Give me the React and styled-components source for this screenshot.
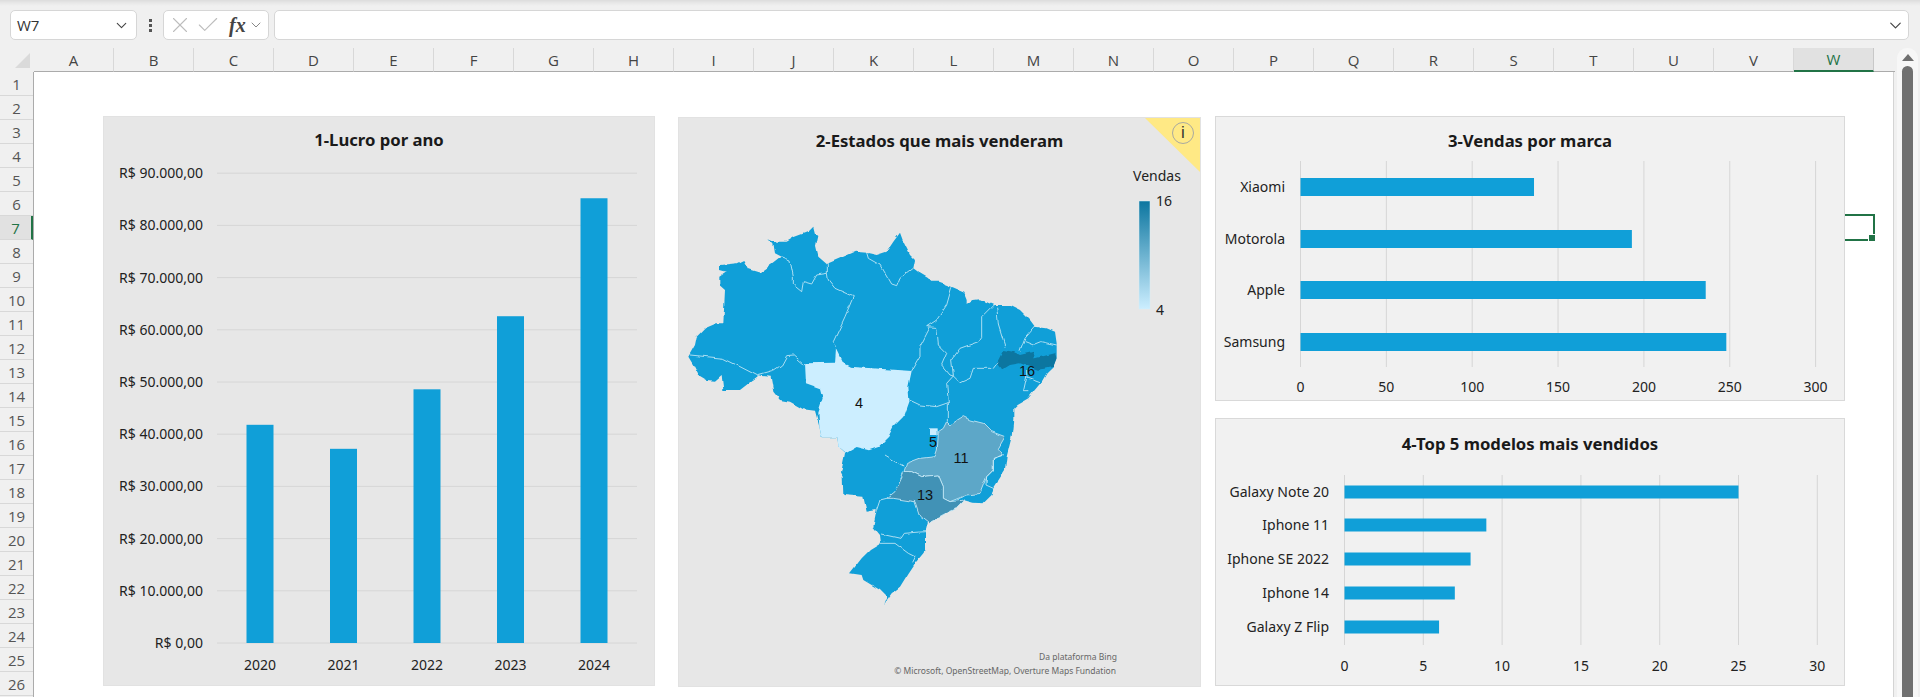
import React from "react";
import styled, { createGlobalStyle } from "styled-components";
import { ChevronDown, X, Check } from "lucide-react";

const GlobalStyle = createGlobalStyle`
  html, body { margin: 0; padding: 0; height: 100%; overflow: hidden; }
  body { background: #f0f0f0; font-family: "Open Sans", "Liberation Sans", sans-serif; }
  * { box-sizing: border-box; }
`;

const COLUMNS = "ABCDEFGHIJKLMNOPQRSTUVW".split("");
const ROWS = Array.from({ length: 26 }, (_, i) => i + 1);

const BLUE = "#109FD8";
const SELECT_GREEN = "#217346";

const Window = styled.div`
  width: 1920px;
  height: 697px;
  overflow: hidden;
  display: flex;
  flex-direction: column;
  background: #f0f0f0;
`;
const TopEdge = styled.div`
  height: 10px;
  flex: none;
  background: linear-gradient(#dcdcdc, #e8e8e8 30%, #f0f0f0 60%);
`;
const FormulaBar = styled.div`
  height: 30px;
  flex: none;
  display: flex;
  align-items: stretch;
  padding-left: 10px;
  padding-right: 11px;
`;
const FieldBox = styled.div`
  background: #fff;
  border: 1px solid #d6d6d6;
  border-radius: 5px;
  display: flex;
  align-items: center;
`;
const NameBox = styled(FieldBox)`
  width: 127px;
  padding: 0 6px 0 6px;
  justify-content: space-between;
  font-size: 15px;
  color: #333;
`;
const Grip = styled.div`
  width: 26px;
  display: flex;
  flex-direction: column;
  align-items: center;
  justify-content: center;
  gap: 2px;
  span {
    width: 3px;
    height: 3px;
    background: #555;
  }
`;
const FxBox = styled(FieldBox)`
  width: 106px;
  padding: 0 2px 0 3px;
  color: #bdbdbd;
  gap: 2px;
`;
const FxGlyph = styled.span`
  font-family: "Liberation Serif", serif;
  font-style: italic;
  font-weight: 700;
  font-size: 20px;
  color: #444;
  margin-left: 6px;
  line-height: 1;
`;
const FormulaInput = styled(FieldBox)`
  flex: 1;
  margin-left: 5px;
  justify-content: flex-end;
  padding-right: 3px;
`;

const HeaderRow = styled.div`
  height: 24px;
  flex: none;
  margin-top: 8px;
  display: flex;
`;
const Corner = styled.div`
  width: 34px;
  position: relative;
  &::after {
    content: "";
    position: absolute;
    right: 4px;
    bottom: 4px;
    border-style: solid;
    border-width: 0 0 15px 15px;
    border-color: transparent transparent #dadada transparent;
  }
`;
const ColumnCell = styled.div`
  width: 80px;
  display: flex;
  align-items: center;
  justify-content: center;
  font-size: 15px;
  color: ${(p) => (p.$active ? SELECT_GREEN : "#444")};
  background: ${(p) => (p.$active ? "#e1e1e1" : "transparent")};
  border-right: 1px solid ${(p) => (p.$active ? "#c8c8c8" : "#d8d8d8")};
  border-bottom: ${(p) => (p.$active ? `2px solid ${SELECT_GREEN}` : "1px solid #ababab")};
`;
const HeaderEnd = styled.div`
  width: 21px;
  border-bottom: 1px solid #ababab;
`;

const Body = styled.div`
  flex: 1;
  display: flex;
  min-height: 0;
`;
const RowHeader = styled.div`
  width: 34px;
  flex: none;
  display: flex;
  flex-direction: column;
  border-right: 1px solid #ababab;
`;
const RowCell = styled.div`
  height: 24px;
  flex: none;
  display: flex;
  align-items: center;
  justify-content: center;
  font-size: 15px;
  color: ${(p) => (p.$active ? SELECT_GREEN : "#555")};
  background: ${(p) => (p.$active ? "#e1e1e1" : "transparent")};
  border-bottom: 1px solid #d8d8d8;
  border-right: ${(p) => (p.$active ? `2px solid ${SELECT_GREEN}` : "0")};
`;
const Sheet = styled.div`
  width: 1860px;
  flex: none;
  position: relative;
  background: #fff;
  padding: 44px 0 0 69px;
  display: grid;
  grid-template-columns: 552px 546px 644px;
  grid-template-rows: 285px 268px;
  row-gap: 17px;
  align-content: start;
  justify-content: start;
  border-right: 1px solid #d4d4d4;
`;
const SelectedCell = styled.div`
  position: absolute;
  left: 1759px;
  top: 142px;
  width: 82px;
  height: 27px;
  border: 2px solid ${SELECT_GREEN};
  &::after {
    content: "";
    position: absolute;
    right: -3px;
    bottom: -3px;
    width: 6px;
    height: 6px;
    background: ${SELECT_GREEN};
    border: 1px solid #fff;
  }
`;
const ScrollTrack = styled.div`
  flex: 1;
  margin: -24px 2px 0 3px;
  background: #f7f7f7;
  border-radius: 10px 10px 0 0;
  display: flex;
  flex-direction: column;
  align-items: center;
  padding-top: 6px;
  gap: 5px;
`;
const ScrollArrow = styled.div`
  border-style: solid;
  border-width: 0 6px 7px 6px;
  border-color: transparent transparent #707070 transparent;
`;
const ScrollThumb = styled.div`
  flex: 1;
  width: 11px;
  background: #707070;
  border-radius: 6px 6px 0 0;
`;

const Card = styled.section`
  position: relative;
  z-index: 1;
  display: flex;
  flex-direction: column;
  overflow: hidden;
  background: ${(p) => p.$bg};
  border: 1px solid ${(p) => (p.$bg === "#e7e7e7" ? "#e2e2e2" : "#d9d9d9")};
`;
const TallCard = styled(Card)`
  grid-row: 1 / span 2;
`;
const MapCard = styled(TallCard)`
  margin: 1px 0 -1px 23px;
`;
const RightCard = styled(Card)`
  margin-left: 14px;
`;
const CardTitle = styled.h2`
  margin: 0;
  height: ${(p) => p.$h || 34}px;
  flex: none;
  padding-top: ${(p) => (p.$h ? p.$h - 21 : 13)}px;
  line-height: 20px;
  text-align: center;
  font-family: "Noto Sans", sans-serif;
  font-weight: 700;
  font-size: 16.7px;
  color: #1a1a1a;
`;
const Plot = styled.svg`
  display: block;
  flex: none;
`;
const AxisText = styled.text`
  font-family: "Noto Sans", sans-serif;
  font-size: 14px;
  fill: #222;
  text-anchor: ${(p) => p.$anchor || "middle"};
`;
const MapValue = styled.text`
  font-family: "Liberation Sans", sans-serif;
  font-size: 14.5px;
  fill: #111;
  text-anchor: middle;
`;
const LegendText = styled.text`
  font-family: "Noto Sans", sans-serif;
  font-size: 14px;
  fill: #222;
  text-anchor: ${(p) => p.$anchor || "start"};
`;
const CreditText = styled.text`
  font-family: "Noto Sans", sans-serif;
  font-size: 8.5px;
  fill: #666;
  text-anchor: end;
`;
const CornerFlag = styled.div`
  position: absolute;
  right: 0;
  top: 0;
  width: 0;
  height: 0;
  border-style: solid;
  border-width: 0 55px 54px 0;
  border-color: transparent #ffe985 transparent transparent;
`;
const InfoBadge = styled.div`
  position: absolute;
  right: 6px;
  top: 4px;
  width: 22px;
  height: 22px;
  border-radius: 50%;
  border: 1px solid #a9a9a0;
  display: flex;
  align-items: center;
  justify-content: center;
  font-family: "Liberation Sans", sans-serif;
  font-size: 17px;
  color: #333;
`;

const PROFIT = [
  { label: "2020", value: 41800 },
  { label: "2021", value: 37200 },
  { label: "2022", value: 48600 },
  { label: "2023", value: 62600 },
  { label: "2024", value: 85200 },
];
const PROFIT_TICKS = [0, 1, 2, 3, 4, 5, 6, 7, 8, 9];

const BRANDS = [
  { label: "Xiaomi", value: 136, y: 187 },
  { label: "Motorola", value: 193, y: 239 },
  { label: "Apple", value: 236, y: 290 },
  { label: "Samsung", value: 248, y: 342 },
];
const MODELS = [
  { label: "Galaxy Note 20", value: 25, y: 492 },
  { label: "Iphone 11", value: 9, y: 525 },
  { label: "Iphone SE 2022", value: 8, y: 559 },
  { label: "Iphone 14", value: 7, y: 593 },
  { label: "Galaxy Z Flip", value: 6, y: 627 },
];

// all charts draw in page coordinates, the viewBox cuts out the card's part
const ProfitChart = () => {
  const zero = 642;
  const step = 52.2;
  return (
    <Plot width="550" height="534" viewBox="104 150 550 534">
      {PROFIT_TICKS.map((t) => (
        <g key={t}>
          <line x1="217" x2="637" y1={zero - t * step} y2={zero - t * step} stroke="#d6d6d6" />
          <AxisText $anchor="end" x="203" y={zero - t * step + 5}>
            {t === 0 ? "R$ 0,00" : `R$ ${t}0.000,00`}
          </AxisText>
        </g>
      ))}
      {PROFIT.map((d, i) => {
        const h = (d.value / 10000) * step;
        const cx = 260 + i * 83.5;
        return (
          <g key={d.label}>
            <rect x={cx - 13.5} y={zero - h} width="27" height={h} fill={BLUE} />
            <AxisText x={cx} y="669">{d.label}</AxisText>
          </g>
        );
      })}
    </Plot>
  );
};

const HBarChart = ({ data, x0, unit, ticks, gridTop, gridBottom, barH, labelX, axisY, viewBox, width, height }) => (
  <Plot width={width} height={height} viewBox={viewBox}>
    {ticks.map((t) => (
      <g key={t}>
        <line x1={x0 + t * unit} x2={x0 + t * unit} y1={gridTop} y2={gridBottom} stroke="#d6d6d6" />
        <AxisText x={x0 + t * unit} y={axisY}>{t}</AxisText>
      </g>
    ))}
    {data.map((d) => (
      <g key={d.label}>
        <rect x={x0} y={d.y - barH / 2} width={d.value * unit} height={barH} fill={BLUE} />
        <AxisText $anchor="end" x={labelX} y={d.y + 5}>{d.label}</AxisText>
      </g>
    ))}
  </Plot>
);

// traced from the reference, in 3x units: page = origin + value / 3
const BRAZIL =
  "M265 85L290 95 320 95 345 80 385 65 400 50 405 70 415 78 408 110 415 140 440 162 480 145 525 125 560 128 590 135 620 125 640 95 660 68 670 95 690 135 705 150 700 175 720 190 745 205 750 215 775 215 815 230 850 245 860 270 860 285 880 270 900 268 940 285 990 285 1020 300 1050 330 1065 350 1100 355 1125 365 1130 400 1130 440 1120 470 1100 490 1085 515 1060 545 1045 565 1010 585 1000 595 1000 630 995 680 980 740 975 780 940 835 935 855 910 880 880 878 850 870 830 895 790 915 740 940 735 960 735 1010 730 1030 705 1060 685 1090 660 1130 635 1150 610 1185 620 1160 600 1140 550 1110 545 1095 510 1090 545 1045 570 1020 603 1000 600 975 580 950 590 900 560 905 550 860 490 855 488 800 483 790 495 730 475 712 472 682 425 682 418 650 405 602 370 598 330 575 300 570 280 545 272 500 235 497 180 540 130 540 125 495 105 512 80 510 55 495 40 465 25 440 45 405 50 380 75 355 110 340 130 340 135 240 118 225 118 200 140 185 120 180 120 165 170 160 190 150 205 178 240 188 280 160 305 140 285 130 280 100Z";
const MATO_GROSSO =
  "M375 460L465 458 468 415 490 460 510 470 695 483 685 530 688 570 670 620 640 650 625 680 615 690 598 708 570 718 530 708 495 728 475 712 472 682 425 682 418 650 415 605 428 565 420 535 378 520Z";
const MINAS =
  "M672 785L680 760 720 745 765 740 772 720 775 665 790 655 800 635 810 645 850 620 870 630 910 640 935 665 975 680 955 715 970 735 940 745 940 780 920 800 900 850 860 855 810 875 790 865 790 830 775 795 725 800 695 785Z";
const SAO_PAULO =
  "M620 865L645 845 672 785 695 785 725 800 775 795 790 830 790 865 810 875 855 870 830 895 790 915 745 940 720 920 705 875 640 865Z";
const PARAIBA =
  "M950 460L970 420 1000 425 1020 435 1060 425 1065 445 1125 430 1130 445 1120 470 1075 480 1050 470 1020 460 990 465 965 480Z";
const BORDERS = [
  "M305 140L330 150 340 200 340 225 365 245 370 215 395 222 410 195 442 190 442 162",
  "M442 190L445 210 465 235 520 260 495 320 460 395 470 410",
  "M560 128L565 145 600 165 635 225 650 230 660 205 700 175",
  "M30 435L130 445 180 470 232 497 275 485 305 465 320 437 340 435 375 465",
  "M815 232L800 285 770 330 740 350 770 352 775 405 800 430 785 465 810 495 820 498",
  "M750 352L720 410 720 440 695 483",
  "M688 570L720 585 770 590 805 578",
  "M940 285L905 320 905 380 895 395 840 415 815 450 820 498",
  "M950 290L955 345 975 410",
  "M1065 350L1035 385 1020 425",
  "M1035 395L1060 405 1085 395 1130 405",
  "M820 498L840 518 870 505 880 475 940 475 955 455",
  "M1040 480L1040 500 1080 515M1040 500L1030 545 1045 545",
  "M820 498L800 520 805 578 805 635",
  "M615 735L670 768",
  "M970 735L940 745 940 780 920 800 918 825 940 835",
  "M590 900L600 870 620 865",
  "M603 972L660 985 670 970 735 965",
  "M603 1000L645 1000 685 1030 705 1040 695 1060",
];
const REGION_STROKE = "#c9e9f7";

const BrazilMap = () => (
  <Plot width="521" height="534" viewBox="679 152 521 534">
    <defs>
      <linearGradient id="legendRamp" x1="0" y1="0" x2="0" y2="1">
        <stop offset="0" stopColor="#0c76a0" />
        <stop offset="1" stopColor="#cceeff" />
      </linearGradient>
      {/* roughens the straight traced segments into border-like edges */}
      <filter id="roughEdge" x="-2%" y="-2%" width="104%" height="104%" colorInterpolationFilters="sRGB">
        <feTurbulence type="fractalNoise" baseFrequency="0.09" numOctaves="2" seed="4" />
        <feDisplacementMap in="SourceGraphic" scale="4" xChannelSelector="R" yChannelSelector="G" />
      </filter>
    </defs>
    <g filter="url(#roughEdge)">
      <g transform="translate(680 210) scale(0.33333)">
        <path d={BRAZIL} fill={BLUE} />
        <path d={MATO_GROSSO} fill="#cceeff" />
        <path d={MINAS} fill="#5da7c8" stroke={REGION_STROKE} strokeWidth="2.5" />
        <path d={SAO_PAULO} fill="#4192b6" stroke={REGION_STROKE} strokeWidth="2.5" />
        <path d={PARAIBA} fill="#0c76a0" />
        <rect x="747" y="655" width="26" height="17" fill="#cceeff" />
        {BORDERS.map((d) => (
          <path key={d} d={d} fill="none" stroke={REGION_STROKE} strokeWidth="2.5" />
        ))}
      </g>
    </g>
    <MapValue x="859" y="408">4</MapValue>
    <MapValue x="1027" y="376">16</MapValue>
    <MapValue x="933" y="447">5</MapValue>
    <MapValue x="961" y="463">11</MapValue>
    <MapValue x="925" y="500">13</MapValue>
    <LegendText $anchor="middle" x="1157" y="181">Vendas</LegendText>
    <rect x="1139" y="201" width="11" height="108" fill="url(#legendRamp)" stroke="#d5edf8" strokeWidth="0.5" />
    <LegendText x="1156" y="206">16</LegendText>
    <LegendText x="1156" y="315">4</LegendText>
    <CreditText x="1117" y="660">Da plataforma Bing</CreditText>
    <CreditText x="1116" y="674">© Microsoft, OpenStreetMap, Overture Maps Fundation</CreditText>
  </Plot>
);

const App = () => (
  <Window>
    <GlobalStyle />
    <TopEdge />
    <FormulaBar>
      <NameBox>
        W7
        <ChevronDown size={17} color="#444" strokeWidth={1.5} />
      </NameBox>
      <Grip>
        <span />
        <span />
        <span />
      </Grip>
      <FxBox>
        <X size={26} strokeWidth={1} />
        <Check size={26} strokeWidth={1} />
        <FxGlyph>fx</FxGlyph>
        <ChevronDown size={16} color="#888" strokeWidth={1.5} />
      </FxBox>
      <FormulaInput>
        <ChevronDown size={19} color="#444" strokeWidth={1.5} />
      </FormulaInput>
    </FormulaBar>
    <HeaderRow>
      <Corner />
      {COLUMNS.map((c) => (
        <ColumnCell key={c} $active={c === "W"}>{c}</ColumnCell>
      ))}
      <HeaderEnd />
    </HeaderRow>
    <Body>
      <RowHeader>
        {ROWS.map((r) => (
          <RowCell key={r} $active={r === 7}>{r}</RowCell>
        ))}
      </RowHeader>
      <Sheet>
        <SelectedCell />
        <TallCard $bg="#e7e7e7">
          <CardTitle>1-Lucro por ano</CardTitle>
          <ProfitChart />
        </TallCard>
        <MapCard $bg="#e7e7e7">
          <CardTitle>2-Estados que mais venderam</CardTitle>
          <BrazilMap />
          <CornerFlag />
          <InfoBadge>i</InfoBadge>
        </MapCard>
        <RightCard $bg="#f1f1f1">
          <CardTitle $h={35}>3-Vendas por marca</CardTitle>
          <HBarChart
            data={BRANDS}
            x0={1300.5}
            unit={1.717}
            ticks={[0, 50, 100, 150, 200, 250, 300]}
            gridTop={161}
            gridBottom={367}
            barH={18}
            labelX={1285}
            axisY={392}
            viewBox="1216 152 628 248"
            width="628"
            height="248"
          />
        </RightCard>
        <RightCard $bg="#f1f1f1">
          <CardTitle $h={36}>4-Top 5 modelos mais vendidos</CardTitle>
          <HBarChart
            data={MODELS}
            x0={1344.5}
            unit={15.76}
            ticks={[0, 5, 10, 15, 20, 25, 30]}
            gridTop={475}
            gridBottom={645}
            barH={13}
            labelX={1329}
            axisY={671}
            viewBox="1216 455 628 230"
            width="628"
            height="230"
          />
        </RightCard>
      </Sheet>
      <ScrollTrack>
        <ScrollArrow />
        <ScrollThumb />
      </ScrollTrack>
    </Body>
  </Window>
);

export default App;
